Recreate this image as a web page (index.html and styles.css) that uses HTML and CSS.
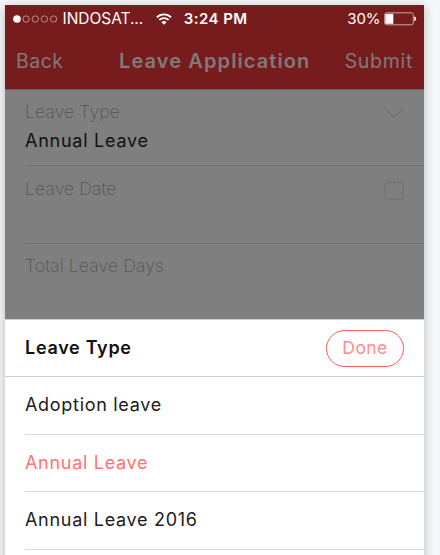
FILE: index.html
```
<!DOCTYPE html>
<html lang="en">
<head>
  <meta charset="UTF-8">
  <meta name="viewport" content="width=device-width, initial-scale=1.0">
  <title>Leave Application</title>
  <link rel="stylesheet" href="styles.css">
</head>
<body>
  <div class="phone">
    <header class="header">
      <div class="status-bar">
        <svg class="signal" width="46" height="8" viewBox="0 0 46 8">
          <circle cx="4" cy="4" r="3.8" fill="#fff"/>
          <g fill="none" stroke="#bb8d8d" stroke-width="1">
            <circle cx="13.2" cy="4" r="3.2"/>
            <circle cx="22.5" cy="4" r="3.2"/>
            <circle cx="31.7" cy="4" r="3.2"/>
            <circle cx="40.9" cy="4" r="3.2"/>
          </g>
        </svg>
        <span class="carrier">INDOSAT...</span>
        <svg class="wifi" width="16" height="12" viewBox="0 0 16 12">
          <g fill="none" stroke="#fff" stroke-width="1.8">
            <path d="M.8 4.3a10.2 10.2 0 0 1 14.4 0"/>
            <path d="M3.3 7a6.6 6.6 0 0 1 9.4 0"/>
          </g>
          <path d="M5.5 9.2a3.5 3.5 0 0 1 5 0L8 11.8z" fill="#fff"/>
        </svg>
        <span class="time">3:24 PM</span>
        <span class="percent">30%</span>
        <svg class="battery" width="33" height="14" viewBox="0 0 33 14">
          <rect x=".7" y=".8" width="28.6" height="12" rx="1.8" fill="none" stroke="#c9a4a4"/>
          <rect x="1.3" y="1.8" width="8" height="10" fill="#fff"/>
          <path d="M30.3 4.5c2.5.5 2.5 4.1 0 4.6z" fill="#fff"/>
        </svg>
      </div>
      <nav class="nav-bar">
        <span class="nav-link back">Back</span>
        <h1 class="title">Leave Application</h1>
        <span class="nav-link submit">Submit</span>
      </nav>
    </header>

    <!-- Form behind the picker -->
    <div class="form">
      <div class="field field-type">
        <div>
          <div class="label">Leave Type</div>
          <div class="value">Annual Leave</div>
        </div>
        <svg class="chevron" width="20" height="12" viewBox="0 0 20 12">
          <path d="M.5.5l9.5 10 9.5-10" fill="none" stroke="#707070" stroke-width="1.2"/>
        </svg>
      </div>
      <div class="field field-date">
        <div class="label">Leave Date</div>
        <svg class="calendar" width="20" height="20" viewBox="0 0 20 20">
          <rect x="1" y="2.5" width="18" height="16.8" rx="1.8" fill="none" stroke="#707070"/>
          <path d="M5 0v4.5M10 0v5M15 0v4.5" stroke="#707070"/>
        </svg>
      </div>
      <div class="field field-total">
        <div class="label">Total Leave Days</div>
      </div>
    </div>

    <!-- Leave type picker -->
    <div class="sheet">
      <div class="sheet-header">
        <h2 class="sheet-title">Leave Type</h2>
        <button class="done" type="button">Done</button>
      </div>
      <ul class="options">
        <li class="option">Adoption leave</li>
        <li class="option selected">Annual Leave</li>
        <li class="option">Annual Leave 2016</li>
        <li class="option"></li>
      </ul>
    </div>
  </div>
</body>
</html>
```

FILE: styles.css
```
* {
  box-sizing: border-box;
}
body {
  margin: 0;
  height: 555px;
  padding: 5px 16px 0 5px;
  overflow: hidden;
  background-color: #f5f6f8;
  font-family: Inter, "Liberation Sans", sans-serif;
}
.phone {
  height: 570px;
  overflow: hidden;
  background-color: #fff;
  box-shadow: 0 2px 10px rgba(0, 0, 0, 0.25);
}
.header {
  height: 84px;
  background-color: #771c1c;
}
.status-bar {
  display: flex;
  align-items: center;
  height: 27px;
  padding: 0 7px 0 8px;
  color: #fff;
  font-size: 15.5px;
  line-height: 27px;
  white-space: nowrap;
}
.signal {
  margin-right: 4px;
}
.carrier {
  width: 94px;
  letter-spacing: -0.05px;
}
.wifi {
  margin-right: 12px;
}
.time {
  width: 165px;
  font-size: 15px;
  font-weight: 600;
  letter-spacing: 0.45px;
}
.percent {
  width: 37px;
  font-size: 15px;
  letter-spacing: -0.1px;
}
.battery {
  flex: none;
}
.nav-bar {
  display: flex;
  justify-content: space-between;
  height: 57px;
  padding: 0 11px 0 11px;
  color: #807a7a;
  line-height: 58px;
  white-space: nowrap;
}
.nav-link {
  font-size: 19.5px;
  font-weight: 400;
}
.back {
  width: 103px;
  letter-spacing: 0.5px;
}
.title {
  flex: 1;
  margin: 0;
  font-size: 20px;
  font-weight: 600;
  letter-spacing: 1.1px;
}
.submit {
  letter-spacing: 0.7px;
}
.form {
  height: 230px;
  padding-left: 20px;
  background-color: #7f7f7f;
  border-top: 1px solid #686262;
}
.field {
  display: flex;
  justify-content: space-between;
  border-bottom: 1px solid #6f6f6f;
}
.field-type {
  height: 76px;
  padding: 9px 20px 0 0;
}
.field-date {
  height: 78px;
  padding: 10px 20px 0 0;
}
.field-total {
  height: 75px;
  padding-top: 9px;
  border-bottom: 0;
}
.label {
  height: 28px;
  color: #555;
  font-size: 17.5px;
  font-weight: 200;
  line-height: 26px;
  letter-spacing: 0.15px;
}
.value {
  color: #111;
  font-size: 18px;
  font-weight: 400;
  line-height: 27px;
  letter-spacing: 0.75px;
}
.chevron {
  margin-top: 8px;
}
.calendar {
  margin-top: 4px;
}
.sheet {
  border-top: 1px solid #ccc;
  background-color: #fff;
}
.sheet-header {
  display: flex;
  align-items: center;
  justify-content: space-between;
  height: 57px;
  padding: 0 20px;
  border-bottom: 1px solid #ccc;
}
.sheet-title {
  margin: 0;
  color: #111;
  font-size: 18px;
  font-weight: 600;
  line-height: 26px;
  letter-spacing: 0.7px;
}
.done {
  width: 78px;
  height: 37px;
  padding: 0 0 2px;
  border: 1px solid #ff5b5b;
  border-radius: 19px;
  background-color: #fff;
  color: #ff8c8c;
  font-family: inherit;
  font-size: 17.5px;
  font-weight: 400;
  letter-spacing: 0.4px;
}
.options {
  margin: 0;
  padding: 0 0 0 20px;
  list-style: none;
}
.option {
  height: 57.6px;
  border-bottom: 1px solid #d8d8d8;
  color: #1c1c1c;
  font-size: 18px;
  line-height: 55px;
  letter-spacing: 0.7px;
}
.selected {
  color: #ff7373;
}
```
